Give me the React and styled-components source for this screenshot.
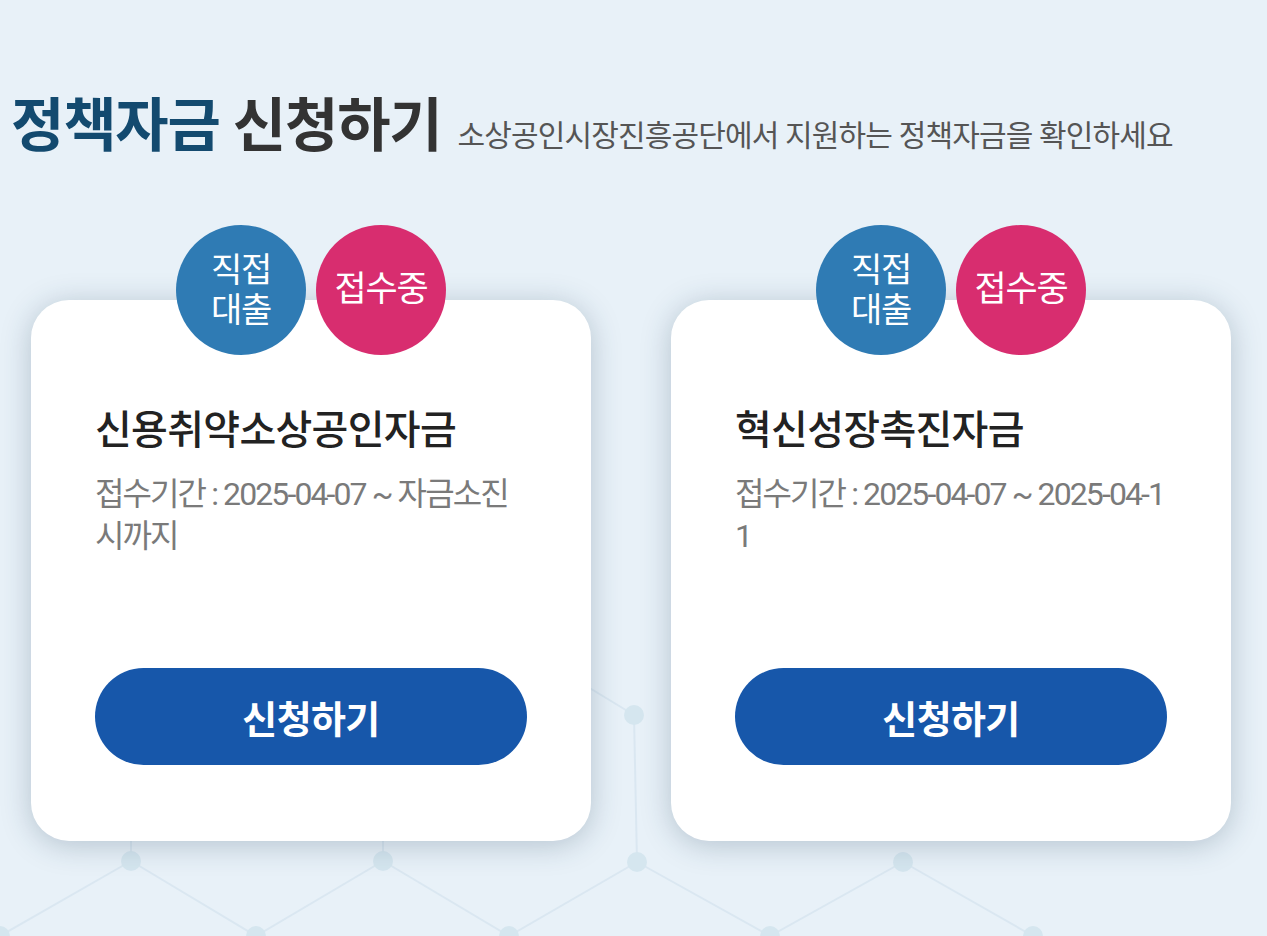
import React from 'react';
import styled, { createGlobalStyle } from 'styled-components';

const GlobalStyle = createGlobalStyle`
  html, body {
    margin: 0;
    padding: 0;
    background: #e8f1f8;
  }
  body {
    font-family: Roboto, "Noto Sans CJK KR", "Noto Sans", sans-serif;
    -webkit-font-smoothing: antialiased;
  }
`;

const funds = [
  { id: 1, name: '신용취약소상공인자금', period: '2025-04-07 ~ 자금소진시까지' },
  { id: 2, name: '혁신성장촉진자금', period: '2025-04-07 ~ 2025-04-11' }
];

const Page = styled.div`
  position: relative;
  width: 1267px;
  height: 936px;
  overflow: hidden;
  background: #e8f1f8;
`;

const Network = styled.svg`
  position: absolute;
  left: 0;
  top: 0;
  width: 1267px;
  height: 936px;
  pointer-events: none;
`;

const Content = styled.div`
  position: relative;
  padding: 91px 0 0 11px;
`;

const Heading = styled.div`
  display: flex;
  align-items: baseline;
  gap: 16px;
`;

const Title = styled.h2`
  margin: 0;
  font-size: 58px;
  line-height: 70px;
  font-weight: 700;
  letter-spacing: -1.2px;
  color: #333;

  em {
    font-style: normal;
    color: #134a6f;
  }
`;

const Sub = styled.p`
  margin: 0;
  font-size: 30px;
  font-weight: 400;
  letter-spacing: -0.85px;
  color: #555;
`;

const CardRow = styled.div`
  display: flex;
  gap: 80px;
  margin-top: 139px;
  padding-left: 20px;
`;

const Card = styled.div`
  position: relative;
  box-sizing: border-box;
  width: 560px;
  height: 541px;
  padding: 105px 64px 76px;
  display: flex;
  flex-direction: column;
  background: #fff;
  border-radius: 38px;
  box-shadow: 0 4px 30px rgba(30, 60, 90, 0.26);
`;

const Badges = styled.div`
  position: absolute;
  top: -75px;
  left: 0;
  right: 0;
  display: flex;
  justify-content: center;
  gap: 10px;
`;

const Badge = styled.span`
  width: 130px;
  height: 130px;
  border-radius: 50%;
  display: flex;
  align-items: center;
  justify-content: center;
  text-align: center;
  color: #fff;
  font-size: ${p => (p.$small ? '34px' : '35px')};
  line-height: 40px;
  letter-spacing: -1.2px;
  background: ${p => p.$color};
`;

const Name = styled.h3`
  margin: 0;
  font-size: 40px;
  line-height: 52px;
  font-weight: 500;
  letter-spacing: -0.7px;
  color: #222;
`;

const Period = styled.p`
  margin: 16px 0 0;
  font-size: 32px;
  line-height: 42px;
  letter-spacing: -1.9px;
  color: #7a7a7a;
  word-break: break-all;
`;

const Apply = styled.button`
  margin-top: auto;
  width: 100%;
  height: 97px;
  border: 0;
  border-radius: 49px;
  background: #1757aa;
  color: #fff;
  font-family: inherit;
  font-size: 38px;
  font-weight: 700;
  letter-spacing: -0.6px;
  cursor: pointer;
`;

const nodes = [
  [634, 715], [131, 861], [383, 861], [637, 862], [903, 862],
  [0, 936], [256, 936], [509, 936], [770, 936], [1033, 936]
];

const lines = [
  [560, 670, 634, 715], [634, 715, 637, 862],
  [131, 600, 131, 861], [383, 600, 383, 861],
  [131, 861, 0, 936], [131, 861, 256, 936],
  [383, 861, 256, 936], [383, 861, 509, 936],
  [637, 862, 509, 936], [637, 862, 770, 936],
  [903, 862, 770, 936], [903, 862, 1033, 936]
];

function Background() {
  return (
    <Network viewBox="0 0 1267 936">
      {lines.map(([x1, y1, x2, y2], i) => (
        <line key={i} x1={x1} y1={y1} x2={x2} y2={y2} stroke="#dae7f1" strokeWidth="2" />
      ))}
      {nodes.map(([cx, cy], i) => (
        <circle key={i} cx={cx} cy={cy} r="10" fill="#d5e6ef" />
      ))}
    </Network>
  );
}

export default function App() {
  return (
    <>
      <GlobalStyle />
      <Page>
        <Background />
        <Content>
          <Heading>
            <Title>
              <em>정책자금</em> 신청하기
            </Title>
            <Sub>소상공인시장진흥공단에서 지원하는 정책자금을 확인하세요</Sub>
          </Heading>
          <CardRow>
            {funds.map(f => (
              <Card key={f.id}>
                <Badges>
                  <Badge $color="#2f7bb4" $small>
                    직접
                    <br />
                    대출
                  </Badge>
                  <Badge $color="#d82d6f">접수중</Badge>
                </Badges>
                <Name>{f.name}</Name>
                <Period>접수기간 : {f.period}</Period>
                <Apply>신청하기</Apply>
              </Card>
            ))}
          </CardRow>
        </Content>
      </Page>
    </>
  );
}
